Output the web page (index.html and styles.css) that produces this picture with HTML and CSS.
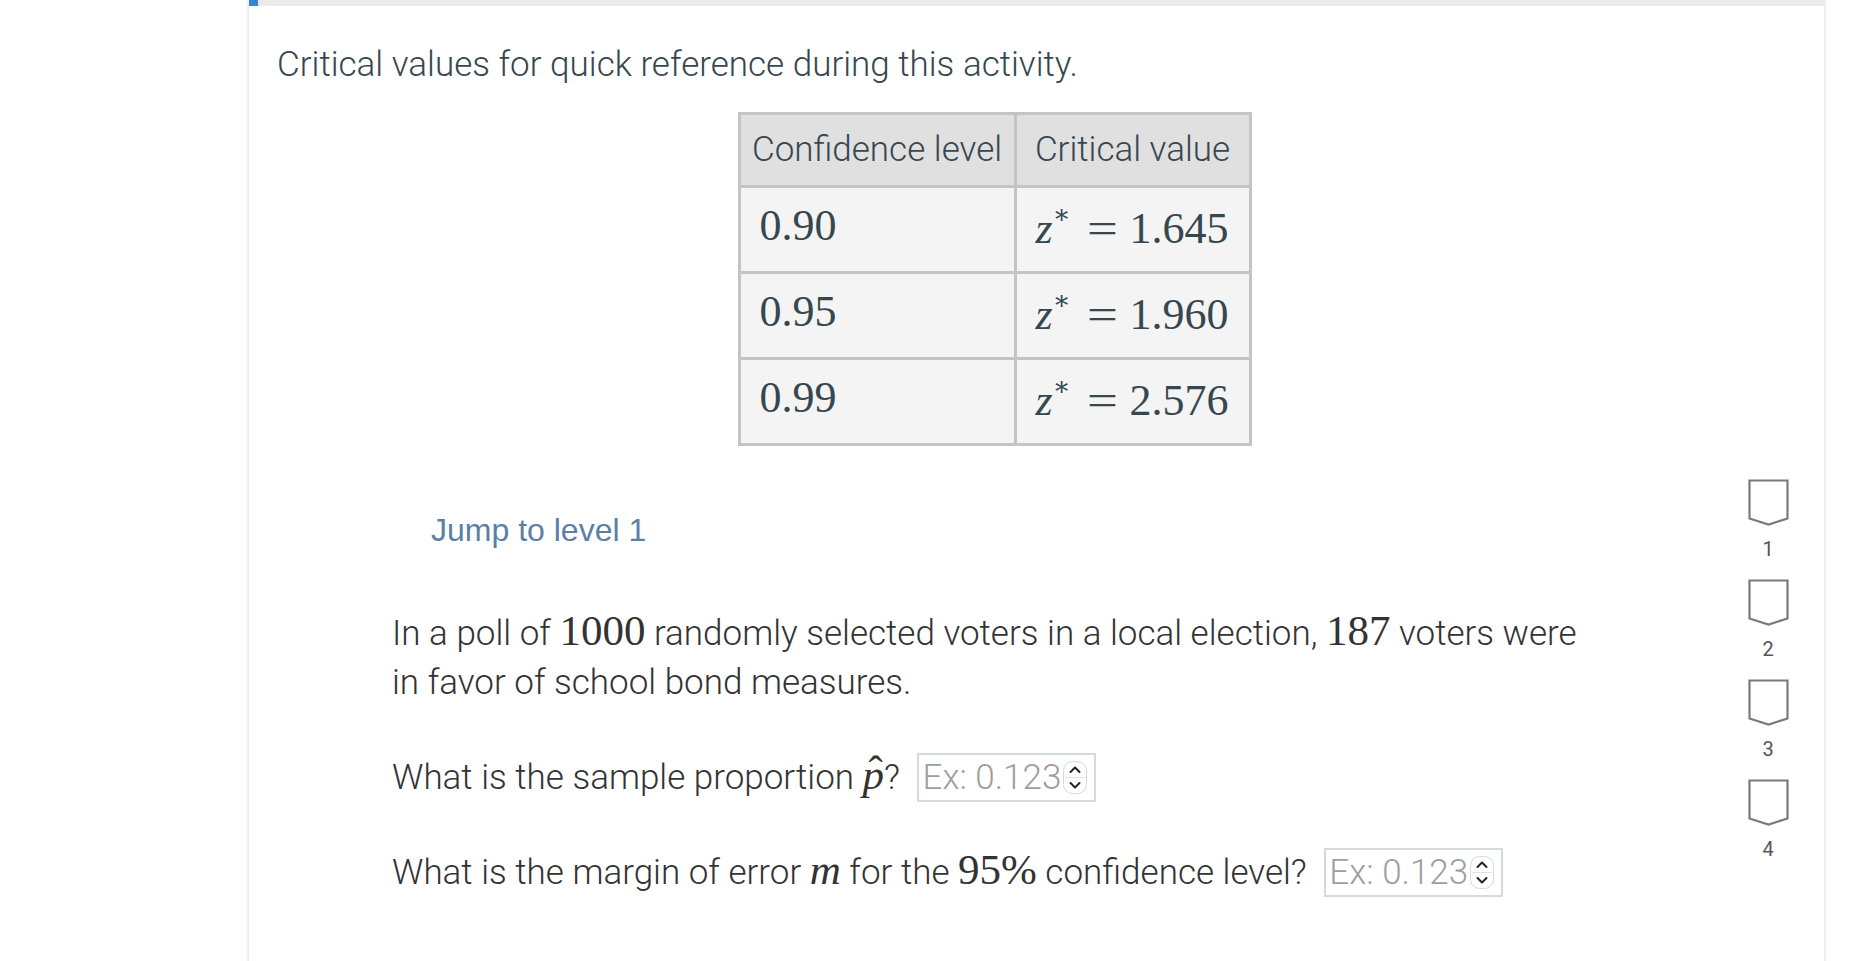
FILE: index.html
```html
<!DOCTYPE html>
<html>
<head>
<meta charset="utf-8">
<title>Critical values</title>
<link rel="stylesheet" href="styles.css">
</head>
<body>
<div class="card">
  <div class="progress"><div class="progress-fill"></div></div>
  <section class="intro">
    <p class="intro-text">Critical values for quick reference during this activity.</p>
    <table class="crit">
      <colgroup><col class="col1"><col class="col2"></colgroup>
      <thead>
        <tr><th>Confidence level</th><th>Critical value</th></tr>
      </thead>
      <tbody>
        <tr><td><span class="math">0.90</span></td><td><span class="math"><i>z</i><span class="star">∗</span><span class="eq">=</span>1.645</span></td></tr>
        <tr><td><span class="math">0.95</span></td><td><span class="math"><i>z</i><span class="star">∗</span><span class="eq">=</span>1.960</span></td></tr>
        <tr><td><span class="math">0.99</span></td><td><span class="math"><i>z</i><span class="star">∗</span><span class="eq">=</span>2.576</span></td></tr>
      </tbody>
    </table>
  </section>
  <section class="activity">
    <div class="activity-main">
      <div class="jump">Jump to level 1</div>
      <p class="problem">In a poll of <span class="math">1000</span> randomly selected voters in a local election, <span class="math">187</span> voters were in favor of school bond measures.</p>
      <div class="question">What is the sample proportion <span class="math"><i class="hat">p</i></span>? <span class="answer"><span class="ph">Ex: 0.123</span><svg class="spin" width="24" height="33" viewBox="0 0 24 33"><rect x="0.5" y="0.5" width="23" height="32" rx="9" fill="#fff" stroke="#d8d8d8"/><line x1="2" y1="16.5" x2="22" y2="16.5" stroke="#e2e2e2"/><path d="M7.5 11 L12 6.5 L16.5 11" fill="none" stroke="#222" stroke-width="2" stroke-linecap="round" stroke-linejoin="round"/><path d="M7.5 22 L12 26.5 L16.5 22" fill="none" stroke="#222" stroke-width="2" stroke-linecap="round" stroke-linejoin="round"/></svg></span></div>
      <div class="question">What is the margin of error <span class="math"><i>m</i></span> for the <span class="math">95%</span> confidence level? <span class="answer"><span class="ph">Ex: 0.123</span><svg class="spin" width="24" height="33" viewBox="0 0 24 33"><rect x="0.5" y="0.5" width="23" height="32" rx="9" fill="#fff" stroke="#d8d8d8"/><line x1="2" y1="16.5" x2="22" y2="16.5" stroke="#e2e2e2"/><path d="M7.5 11 L12 6.5 L16.5 11" fill="none" stroke="#222" stroke-width="2" stroke-linecap="round" stroke-linejoin="round"/><path d="M7.5 22 L12 26.5 L16.5 22" fill="none" stroke="#222" stroke-width="2" stroke-linecap="round" stroke-linejoin="round"/></svg></span></div>
    </div>
    <nav class="levels">
      <div class="level"><svg class="shield" width="41" height="48" viewBox="0 0 41 48"><path d="M1.5 1.5 H39.5 V39.5 L20.5 45.5 L1.5 39.5 Z" fill="none" stroke="#7a7a7a" stroke-width="2.2" stroke-linejoin="miter"/></svg><span class="level-num">1</span></div>
      <div class="level"><svg class="shield" width="41" height="48" viewBox="0 0 41 48"><path d="M1.5 1.5 H39.5 V39.5 L20.5 45.5 L1.5 39.5 Z" fill="none" stroke="#7a7a7a" stroke-width="2.2" stroke-linejoin="miter"/></svg><span class="level-num">2</span></div>
      <div class="level"><svg class="shield" width="41" height="48" viewBox="0 0 41 48"><path d="M1.5 1.5 H39.5 V39.5 L20.5 45.5 L1.5 39.5 Z" fill="none" stroke="#7a7a7a" stroke-width="2.2" stroke-linejoin="miter"/></svg><span class="level-num">3</span></div>
      <div class="level"><svg class="shield" width="41" height="48" viewBox="0 0 41 48"><path d="M1.5 1.5 H39.5 V39.5 L20.5 45.5 L1.5 39.5 Z" fill="none" stroke="#7a7a7a" stroke-width="2.2" stroke-linejoin="miter"/></svg><span class="level-num">4</span></div>
    </nav>
  </section>
</div>
</body>
</html>
```

FILE: styles.css
```css
* { box-sizing: border-box; }
html, body { margin: 0; padding: 0; background: #fff; overflow: hidden; }
body { font-family: Roboto, "Liberation Sans", sans-serif; font-weight: 300; }

.card {
  margin-left: 249px;
  width: 1575px;
  min-height: 1100px;
  background: #fff;
  box-shadow: 0 0 4px rgba(0, 0, 0, 0.2);
}
.progress { height: 6px; background: #ebebeb; }
.progress-fill { width: 9px; height: 100%; background: #3a84d8; }

.intro { padding: 0 112px 0 28px; }
.intro-text {
  margin: 35px 0 23px;
  font-size: 35px;
  line-height: 48px;
  color: #37474f;
}

.crit {
  margin: 0 auto;
  border-collapse: collapse;
  table-layout: fixed;
  width: 511px;
  border: 3px solid #c4c4c4;
}
.col1 { width: 276px; }
.col2 { width: 235px; }
.crit th, .crit td { border: 3px solid #c4c4c4; padding: 0; }
.crit th {
  height: 73px;
  background: #e0e0e0;
  font-size: 35px;
  font-weight: 300;
  color: #37474f;
  text-align: center;
  padding-bottom: 2px;
}
.crit td {
  height: 86px;
  background: #f4f4f4;
  padding: 0 0 7px 19px;
  color: #37474f;
}
.crit td .math { font-size: 44px; }
.crit td .eq { margin: 0 15px 0 19px; }

.math {
  font-family: "Liberation Serif", "DejaVu Serif", serif;
  font-weight: 400;
  font-size: 43px;
  line-height: 1;
}
.math i { font-style: italic; }
.star {
  font-family: "DejaVu Serif", serif;
  font-size: 0.6em;
  vertical-align: 0.75em;
}
.eq { display: inline-block; margin: 0 15px 0 19px; transform: scaleX(1.25); }
.hat { position: relative; display: inline-block; }
.hat::after {
  content: "ˆ";
  position: absolute;
  left: 0.14em;
  top: -0.1em;
  font-style: normal;
}

.activity { display: flex; margin-top: 35px; }
.activity-main { flex: 1; padding-left: 143px; color: #333; }
.jump {
  margin: 25px 0 0 39px;
  font-family: "Liberation Sans", Arial, sans-serif;
  font-weight: 400;
  font-size: 32px;
  line-height: 48px;
  color: #5b7fa7;
}
.problem {
  width: 1200px;
  margin: 55px 0 0;
  font-size: 35px;
  line-height: 49px;
}
.question {
  margin-top: 46px;
  font-size: 35px;
  line-height: 49px;
}
.answer {
  display: inline-flex;
  align-items: center;
  justify-content: space-between;
  width: 179px;
  height: 49px;
  margin-left: 9px;
  padding: 0 7px 0 3px;
  border: 2px solid #d3dbde;
  vertical-align: baseline;
}
.ph { color: #9e9e9e; line-height: 45px; }
.spin { display: block; flex: none; }

.levels {
  width: 112px;
  margin-top: -2px;
  display: flex;
  flex-direction: column;
  align-items: center;
}
.level {
  display: flex;
  flex-direction: column;
  align-items: center;
  margin-bottom: 18px;
}
.shield { display: block; }
.level-num {
  margin-top: 10px;
  font-size: 20px;
  line-height: 24px;
  font-weight: 400;
  color: #555;
}
```
